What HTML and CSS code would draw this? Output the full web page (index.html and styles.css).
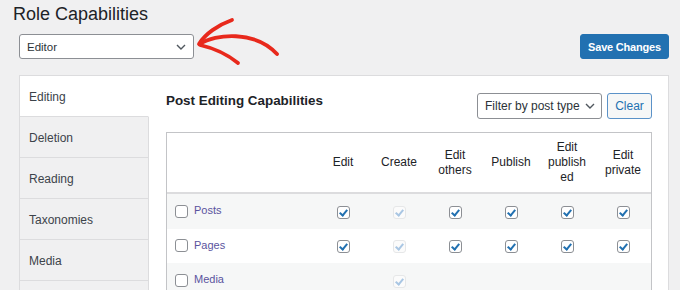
FILE: index.html
```html
<!DOCTYPE html>
<html lang="en">
<head>
  <meta charset="UTF-8" />
  <meta name="viewport" content="width=device-width, initial-scale=1.0"/>
  <title>Role Capabilities</title>
  <link rel="stylesheet" href="styles.css">
</head>
<body>

  <div class="wrap">
    <h1 class="page-title">Role Capabilities</h1>

    <!-- Rollval och spara -->
    <div class="toolbar">
      <div class="role-select">
        <span>Editor</span>
        <svg class="chevron" width="10" height="6" viewBox="0 0 10 6"><path d="M1 1 L5 5 L9 1" /></svg>
      </div>
      <button class="button-primary">Save Changes</button>
    </div>

    <!-- Pil som pekar på rollvalet -->
    <svg class="annotation-arrow" width="95" height="58" viewBox="190 12 95 58">
      <path d="M200 44 C 215 34, 255 30, 277 54" />
      <path d="M199 44 C 205 34, 218 25, 232 20" />
      <path d="M200 45 Q 222 50, 238 63" />
    </svg>

    <div class="panel">
      <ul class="tabs">
        <li class="tab active">Editing</li>
        <li class="tab">Deletion</li>
        <li class="tab">Reading</li>
        <li class="tab">Taxonomies</li>
        <li class="tab">Media</li>
      </ul>

      <div class="tab-content">
        <div class="content-head">
          <h2>Post Editing Capabilities</h2>
          <div class="filters">
            <div class="filter-select">
              <span>Filter by post type</span>
              <svg class="chevron" width="10" height="6" viewBox="0 0 10 6"><path d="M1 1 L5 5 L9 1" /></svg>
            </div>
            <button class="button-secondary">Clear</button>
          </div>
        </div>

        <table class="caps">
          <colgroup>
            <col class="col-type">
            <col class="col-cap">
            <col class="col-cap">
            <col class="col-cap">
            <col class="col-cap">
            <col class="col-cap">
            <col class="col-cap">
          </colgroup>
          <thead>
            <tr>
              <th></th>
              <th>Edit</th>
              <th>Create</th>
              <th>Edit others</th>
              <th>Publish</th>
              <th>Edit published</th>
              <th>Edit private</th>
            </tr>
          </thead>
          <tbody>
            <tr class="alt">
              <td class="type"><label><input type="checkbox"><a href="#">Posts</a></label></td>
              <td><input type="checkbox" checked></td>
              <td><input type="checkbox" checked disabled></td>
              <td><input type="checkbox" checked></td>
              <td><input type="checkbox" checked></td>
              <td><input type="checkbox" checked></td>
              <td><input type="checkbox" checked></td>
            </tr>
            <tr>
              <td class="type"><label><input type="checkbox"><a href="#">Pages</a></label></td>
              <td><input type="checkbox" checked></td>
              <td><input type="checkbox" checked disabled></td>
              <td><input type="checkbox" checked></td>
              <td><input type="checkbox" checked></td>
              <td><input type="checkbox" checked></td>
              <td><input type="checkbox" checked></td>
            </tr>
            <tr class="alt">
              <td class="type"><label><input type="checkbox"><a href="#">Media</a></label></td>
              <td></td>
              <td><input type="checkbox" checked disabled></td>
              <td></td>
              <td></td>
              <td></td>
              <td></td>
            </tr>
          </tbody>
        </table>
      </div>
    </div>
  </div>

</body>
</html>
```

FILE: styles.css
```css
html {
  overflow: hidden;
}

body {
  margin: 0;
  font-family: 'Liberation Sans', Arial, sans-serif;
  background-color: #f0f0f1;
  color: #1d2327;
}

.wrap {
  position: relative;
  padding: 0 11px 0 19px;
}

.page-title {
  font-size: 18px;
  font-weight: normal;
  line-height: 24px;
  margin: 0 0 0 -6px;
  padding-top: 2px;
}

.toolbar {
  display: flex;
  justify-content: space-between;
  align-items: center;
  margin-top: 8px;
}

.role-select,
.filter-select {
  display: flex;
  align-items: center;
  justify-content: space-between;
  box-sizing: border-box;
  background-color: #fff;
  border: 1px solid #8c8f94;
  border-radius: 3px;
  color: #2c3338;
}

.role-select {
  width: 175px;
  height: 25px;
  padding: 0 7px 0 7px;
  font-size: 11.5px;
}

.chevron path {
  fill: none;
  stroke: #50575e;
  stroke-width: 1.4;
}

.button-primary,
.button-secondary {
  font-family: inherit;
  box-sizing: border-box;
  border-radius: 3px;
  cursor: pointer;
}

.button-primary {
  width: 89px;
  height: 25px;
  padding: 0;
  background-color: #2271b1;
  border: 1px solid #2271b1;
  color: #fff;
  font-size: 11px;
  font-weight: bold;
  letter-spacing: -0.2px;
}

.annotation-arrow {
  position: absolute;
  left: 190px;
  top: 12px;
}

.annotation-arrow path {
  fill: none;
  stroke: #e8291c;
  stroke-width: 3.8;
  stroke-linecap: round;
}

.panel {
  display: flex;
  margin-top: 16px;
  background-color: #fff;
  border: 1px solid #dcdcde;
}

.tabs {
  flex: none;
  width: 129px;
  margin: 0;
  padding: 0;
  list-style: none;
  background-color: #f0f0f1;
  box-shadow: inset -1px 0 0 #dcdcde;
}

.tab {
  box-sizing: border-box;
  height: 41px;
  line-height: 40px;
  padding: 1px 0 0 9px;
  font-size: 12px;
  color: #3c434a;
  background-color: #f0f0f1;
  border-right: 1px solid #dcdcde;
  border-bottom: 1px solid #dcdcde;
}

.tab.active {
  background-color: #fff;
  border-right-color: #fff;
}

.tab-content {
  flex: 1;
  padding: 17px 16px 0 17px;
}

.content-head {
  display: flex;
  justify-content: space-between;
  align-items: flex-start;
}

.content-head h2 {
  margin: 0;
  font-size: 13.4px;
  font-weight: bold;
  color: #1d2327;
}

.filters {
  display: flex;
  gap: 5px;
}

.filter-select {
  width: 125px;
  height: 26px;
  padding: 0 6px 0 7px;
  font-size: 12px;
}

.button-secondary {
  width: 45px;
  height: 26px;
  padding: 0;
  background-color: #f6f7f7;
  border: 1px solid #5b92c8;
  color: #2271b1;
  font-size: 12px;
}

.caps {
  width: 100%;
  margin-top: 13px;
  table-layout: fixed;
  border-collapse: separate;
  border-spacing: 0;
  border: 1px solid #c3c4c7;
  border-bottom: none;
}

.col-type {
  width: 148px;
}

.col-cap {
  width: 56px;
}

.caps th {
  height: 59px;
  padding: 0 8px;
  font-size: 12px;
  font-weight: normal;
  line-height: 15px;
  text-align: center;
  color: #1d2327;
  border-bottom: 2px solid #dcdcde;
  overflow-wrap: anywhere;
}

.caps td {
  height: 34.5px;
  padding: 0;
  text-align: center;
  vertical-align: middle;
}

.caps tr.alt td {
  background-color: #f6f7f7;
}

.caps td.type {
  text-align: left;
  padding-left: 8px;
}

.type label {
  display: flex;
  align-items: center;
  gap: 6px;
  font-size: 11px;
}

.type a {
  color: #5a539e;
  text-decoration: none;
  margin-top: -2px;
}

input[type="checkbox"] {
  appearance: none;
  display: inline-block;
  box-sizing: border-box;
  width: 13px;
  height: 13px;
  margin: 0;
  vertical-align: middle;
  background-color: #fff;
  border: 1px solid #8c8f94;
  border-radius: 3px;
}

input[type="checkbox"]:checked::before {
  content: '';
  display: block;
  width: 3px;
  height: 6px;
  margin: 1px auto 0 auto;
  border: solid #2271b1;
  border-width: 0 2px 2px 0;
  transform: rotate(40deg);
}

input[type="checkbox"]:disabled {
  border-color: #e6e7e8;
  background-color: #fbfbfb;
}

input[type="checkbox"]:disabled::before {
  border-color: #a9c6e3;
}
```
